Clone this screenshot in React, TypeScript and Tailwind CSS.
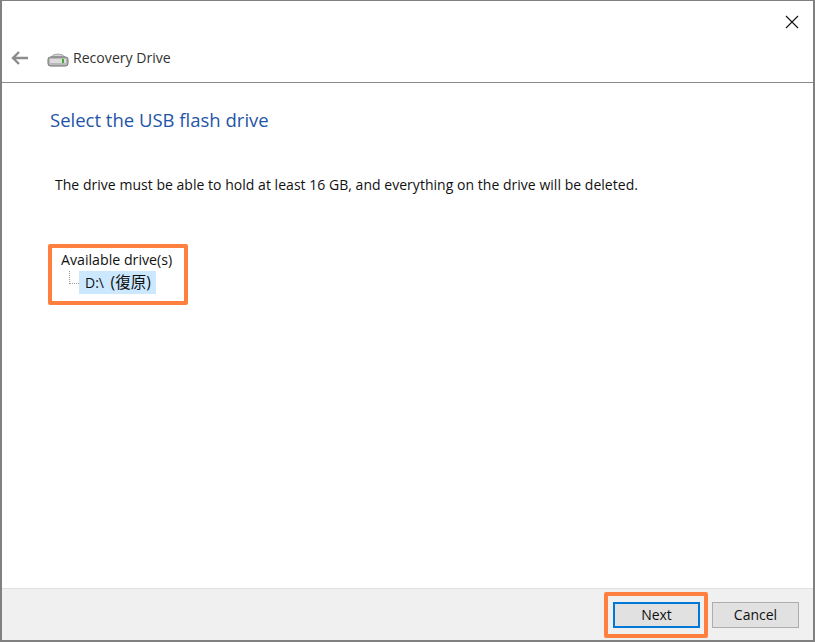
const FONT = "font-['Open_Sans','Noto_Sans_CJK_TC',sans-serif]"

const DriveIcon = () => (
  <svg width="22" height="14" viewBox="0 0 22 14" className="shrink-0">
    <path d="M4 4 Q6 1 11 1 Q16 1 18 4 Z" fill="#d4d4d4" stroke="#a8a8a8" />
    <rect x="1" y="4" width="20" height="9" rx="2.5" fill="#b9b9b9" stroke="#6f6f6f" />
    <rect x="3" y="6" width="16" height="4" fill="#dcdcdc" />
    <rect x="15" y="6" width="2" height="4" fill="#3fae2a" />
  </svg>
)

export default function App() {
  return (
    <div className={`${FONT} relative flex h-[642px] w-[815px] flex-col overflow-hidden border-x-2 border-t border-b-2 border-[#808080] bg-white text-[14px] text-[#111]`}>
      {/* Title bar */}
      <div className="flex h-[34px] justify-end">
        <svg width="14" height="14" viewBox="0 0 14 14" className="mr-[14px] mt-[14px]">
          <path d="M1 1 L13 13 M13 1 L1 13" stroke="#111" strokeWidth="1.1" fill="none" />
        </svg>
      </div>

      {/* Nav row */}
      <div className="flex h-[48px] items-center border-b border-[#8a8a8a] pb-[1px]">
        <svg width="18" height="14" viewBox="0 0 18 14" className="ml-[9px]">
          <path d="M17 7 H2 M8 1 L2 7 L8 13" stroke="#8c8c8c" strokeWidth="2.4" fill="none" />
        </svg>
        <div className="ml-[18px] mt-[3px]">
          <DriveIcon />
        </div>
        <span className="ml-[4px] text-[14.1px] text-[#333]">Recovery Drive</span>
      </div>

      {/* Body */}
      <div className="flex flex-1 flex-col">
        <h1 className="ml-[48px] mt-[22px] text-[18.5px] leading-[30px] text-[#1f55a8]">Select the USB flash drive</h1>
        <p className="ml-[53px] mt-[40px] leading-[20px] tracking-[0.03px]">
          The drive must be able to hold at least 16 GB, and everything on the drive will be deleted.
        </p>
        <div className="ml-[59px] mt-[55px] text-[14.2px] leading-[20px]">Available drive(s)</div>
        <div className="ml-[67px] mt-[1px] flex items-start">
          <div className="h-[13px] w-[10px] border-b border-l border-dotted border-[#999]" />
          <span className="bg-[#cce8ff] pl-[6px] pr-[5px] leading-[23px] [word-spacing:3px]">
            D:\ <span className="text-[15.5px]">(復原)</span>
          </span>
        </div>
      </div>

      {/* Footer */}
      <div className="flex h-[52px] items-center justify-end gap-[12px] border-t border-[#dfdfdf] bg-[#f0f0f0] pr-[14px]">
        <button className="h-[26px] w-[87px] border-2 border-[#0078d7] bg-[#e1e1e1]">Next</button>
        <button className="h-[26px] w-[87px] border border-[#adadad] bg-[#e1e1e1]">Cancel</button>
      </div>

      {/* Orange callouts */}
      <div className="absolute left-[46px] top-[243px] h-[61px] w-[140px] rounded-[2px] border-4 border-[#ff7f3f]" />
      <div className="absolute left-[602px] top-[591px] h-[46px] w-[104px] rounded-[2px] border-4 border-[#ff7f3f]" />
    </div>
  )
}
